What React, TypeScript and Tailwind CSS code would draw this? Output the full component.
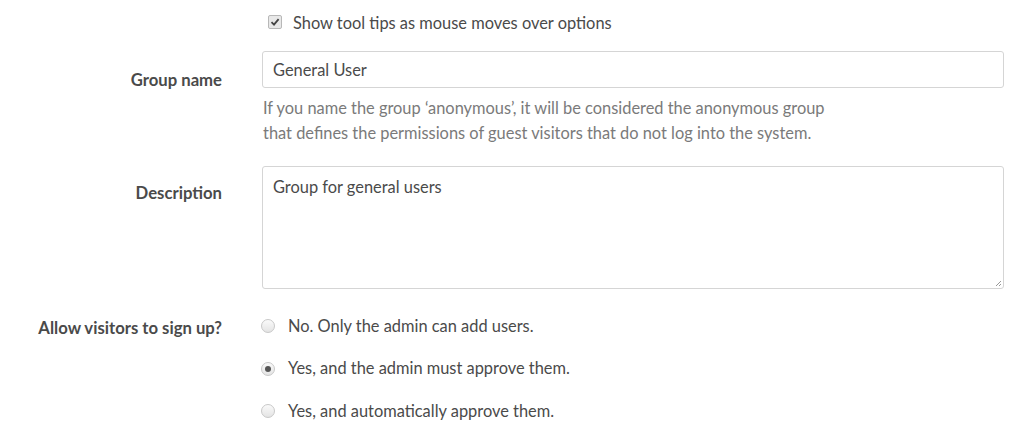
import React from "react";

function Radio({ checked, label }: { checked?: boolean; label: string }) {
  return (
    <div className="flex items-center h-[42.5px]">
      <span className="w-[14px] h-[14px] rounded-full border border-[#c8c8c8] bg-gradient-to-b from-[#fafafa] to-[#e4e4e4] flex items-center justify-center ml-[-1px]">
        {checked && <span className="w-[6px] h-[6px] rounded-full bg-[#555]" />}
      </span>
      <span className="ml-[13px] text-[16.4px] text-[#4a4a4a]">{label}</span>
    </div>
  );
}

export default function App() {
  return (
    <div
      className="w-[1024px] h-[431px] bg-white overflow-hidden"
      style={{ fontFamily: "Lato, 'Open Sans', sans-serif" }}
    >
      <div className="grid grid-cols-[222px_742px] gap-x-[40px]">
        {/* checkbox row */}
        <div />
        <div className="flex items-center h-[44px] pl-[6px]">
          <span className="w-[14px] h-[14px] rounded-[2px] border border-[#b8b8b8] bg-[#e8e8e8] flex items-center justify-center">
            <svg width="10" height="10" viewBox="0 0 10 10">
              <path d="M1.5 5.2 L4 7.6 L8.6 2.2" fill="none" stroke="#444" strokeWidth="1.8" />
            </svg>
          </span>
          <span className="ml-[11px] mt-[2px] text-[16.4px] text-[#4a4a4a]">
            Show tool tips as mouse moves over options
          </span>
        </div>

        {/* group name */}
        <div className="text-right font-bold text-[16.7px] text-[#4a4a4a] pt-[24px]">
          Group name
        </div>
        <div className="pt-[7px]">
          <div className="h-[37px] border border-[#d5d5d5] rounded-[3px] px-[10px] pt-[2px] flex items-center text-[16.4px] text-[#4a4a4a]">
            General User
          </div>
          <div className="mt-[7px] pl-[1px] text-[16.4px] leading-[25px] text-[#7a7a7a]">
            If you name the group ‘anonymous’, it will be considered the anonymous group
            <br />
            that defines the permissions of guest visitors that do not log into the system.
          </div>
        </div>

        {/* description */}
        <div className="text-right font-bold text-[16.7px] text-[#4a4a4a] pt-[36px]">
          Description
        </div>
        <div className="pt-[21px]">
          <div className="relative h-[123px] border border-[#d5d5d5] rounded-[3px] px-[10px] pt-[8px] text-[16.4px] text-[#4a4a4a]">
            Group for general users
            <svg className="absolute right-[1px] bottom-[1px]" width="8" height="8" viewBox="0 0 8 8">
              <path d="M7 2 L2 7 M7 5 L5 7" stroke="#999" strokeWidth="1" />
            </svg>
          </div>
        </div>

        {/* radios */}
        <div className="text-right font-bold text-[16.7px] text-[#4a4a4a] pt-[27px]">
          Allow visitors to sign up?
        </div>
        <div className="pt-[16px]">
          <Radio label="No. Only the admin can add users." />
          <Radio checked label="Yes, and the admin must approve them." />
          <Radio label="Yes, and automatically approve them." />
        </div>
      </div>
    </div>
  );
}
